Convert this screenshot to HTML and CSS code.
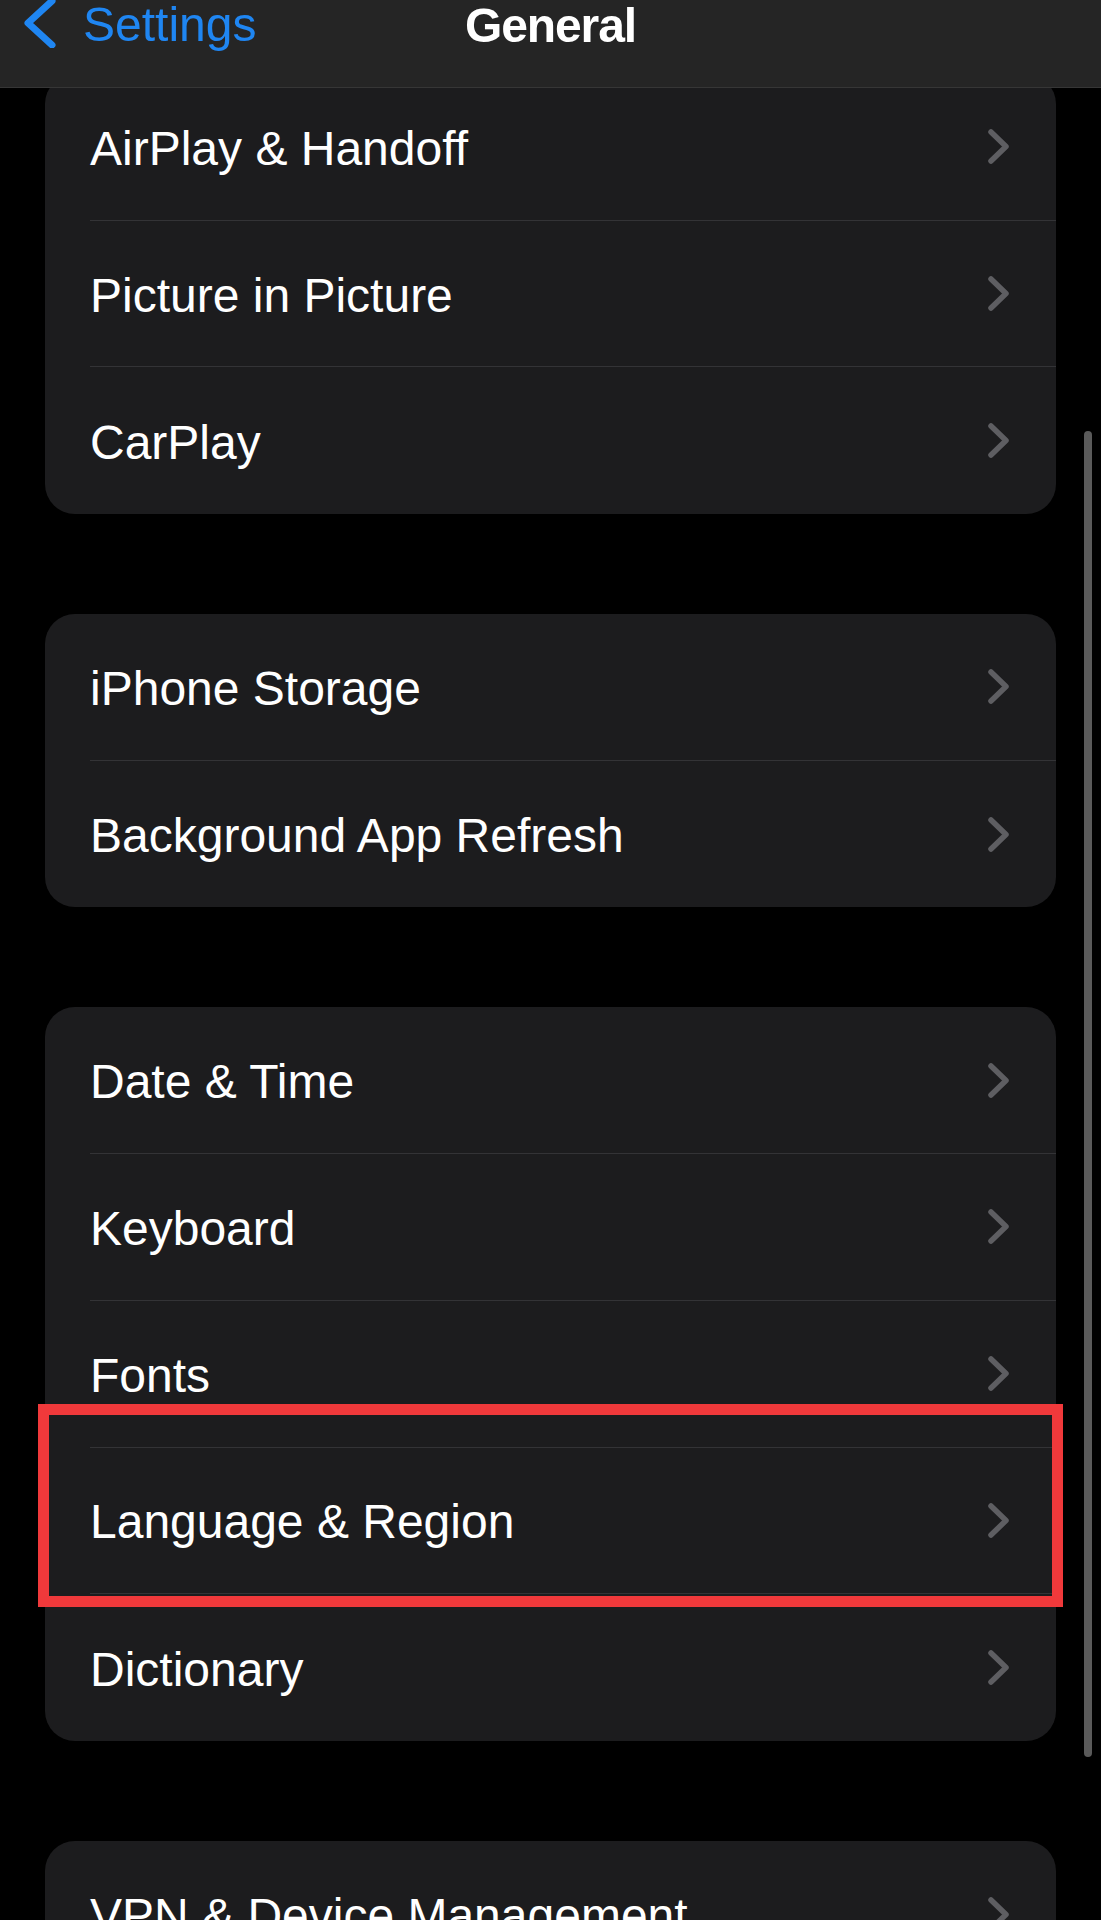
FILE: index.html
```html
<!DOCTYPE html>
<html lang="en">
<head>
<meta charset="utf-8">
<title>General</title>
<link rel="stylesheet" href="styles.css">
</head>
<body>
<header class="navbar">
  <div class="nav-back">
    <svg class="back-icon" width="60" height="48" viewBox="0 0 60 48" aria-hidden="true">
      <polyline points="52,1 28,23 52,45" fill="none" stroke="#1f86f2" stroke-width="7" stroke-linecap="round" stroke-linejoin="round"/>
    </svg>
    <span class="back-label">Settings</span>
  </div>
  <div class="nav-title">General</div>
  <div class="nav-spacer"></div>
</header>

<main class="content">
  <section class="group">
    <div class="row"><div class="row-body"><span class="label">AirPlay &amp; Handoff</span><svg class="chev" width="21" height="35" viewBox="0 0 21 35"><polyline points="3,3 18,17.5 3,32" fill="none" stroke="#5e5e62" stroke-width="5.5" stroke-linecap="round" stroke-linejoin="round"/></svg></div></div>
    <div class="row"><div class="row-body"><span class="label">Picture in Picture</span><svg class="chev" width="21" height="35" viewBox="0 0 21 35"><polyline points="3,3 18,17.5 3,32" fill="none" stroke="#5e5e62" stroke-width="5.5" stroke-linecap="round" stroke-linejoin="round"/></svg></div></div>
    <div class="row"><div class="row-body"><span class="label">CarPlay</span><svg class="chev" width="21" height="35" viewBox="0 0 21 35"><polyline points="3,3 18,17.5 3,32" fill="none" stroke="#5e5e62" stroke-width="5.5" stroke-linecap="round" stroke-linejoin="round"/></svg></div></div>
  </section>

  <section class="group">
    <div class="row"><div class="row-body"><span class="label">iPhone Storage</span><svg class="chev" width="21" height="35" viewBox="0 0 21 35"><polyline points="3,3 18,17.5 3,32" fill="none" stroke="#5e5e62" stroke-width="5.5" stroke-linecap="round" stroke-linejoin="round"/></svg></div></div>
    <div class="row"><div class="row-body"><span class="label">Background App Refresh</span><svg class="chev" width="21" height="35" viewBox="0 0 21 35"><polyline points="3,3 18,17.5 3,32" fill="none" stroke="#5e5e62" stroke-width="5.5" stroke-linecap="round" stroke-linejoin="round"/></svg></div></div>
  </section>

  <section class="group">
    <div class="row"><div class="row-body"><span class="label">Date &amp; Time</span><svg class="chev" width="21" height="35" viewBox="0 0 21 35"><polyline points="3,3 18,17.5 3,32" fill="none" stroke="#5e5e62" stroke-width="5.5" stroke-linecap="round" stroke-linejoin="round"/></svg></div></div>
    <div class="row"><div class="row-body"><span class="label">Keyboard</span><svg class="chev" width="21" height="35" viewBox="0 0 21 35"><polyline points="3,3 18,17.5 3,32" fill="none" stroke="#5e5e62" stroke-width="5.5" stroke-linecap="round" stroke-linejoin="round"/></svg></div></div>
    <div class="row"><div class="row-body"><span class="label">Fonts</span><svg class="chev" width="21" height="35" viewBox="0 0 21 35"><polyline points="3,3 18,17.5 3,32" fill="none" stroke="#5e5e62" stroke-width="5.5" stroke-linecap="round" stroke-linejoin="round"/></svg></div></div>
    <div class="row row-highlight"><div class="row-body"><span class="label">Language &amp; Region</span><svg class="chev" width="21" height="35" viewBox="0 0 21 35"><polyline points="3,3 18,17.5 3,32" fill="none" stroke="#5e5e62" stroke-width="5.5" stroke-linecap="round" stroke-linejoin="round"/></svg></div><div class="highlight-box"></div></div>
    <div class="row"><div class="row-body"><span class="label">Dictionary</span><svg class="chev" width="21" height="35" viewBox="0 0 21 35"><polyline points="3,3 18,17.5 3,32" fill="none" stroke="#5e5e62" stroke-width="5.5" stroke-linecap="round" stroke-linejoin="round"/></svg></div></div>
  </section>

  <section class="group">
    <div class="row"><div class="row-body"><span class="label">VPN &amp; Device Management</span><svg class="chev" width="21" height="35" viewBox="0 0 21 35"><polyline points="3,3 18,17.5 3,32" fill="none" stroke="#5e5e62" stroke-width="5.5" stroke-linecap="round" stroke-linejoin="round"/></svg></div></div>
  </section>
</main>

<div class="scroll-indicator"></div>
</body>
</html>
```

FILE: styles.css
```css
html, body {
  margin: 0;
  padding: 0;
  background: #000;
  height: 1920px;
  overflow: hidden;
}

body {
  font-family: "Liberation Sans", Arial, sans-serif;
  color: #fff;
  position: relative;
}

.navbar {
  position: fixed;
  top: 0;
  left: 0;
  right: 0;
  height: 88px;
  box-sizing: border-box;
  background: #252525;
  border-bottom: 1px solid #363636;
  display: grid;
  grid-template-columns: 1fr auto 1fr;
  align-items: start;
  z-index: 10;
}

.nav-back {
  display: flex;
  align-items: flex-start;
  gap: 23px;
}

.back-icon {
  display: block;
  flex: none;
}

.back-label {
  font-size: 48px;
  line-height: 48px;
  color: #1f86f2;
  margin-top: 1px;
}

.nav-title {
  font-size: 48px;
  line-height: 48px;
  font-weight: bold;
  letter-spacing: -1.1px;
  margin-top: 2px;
}

.content {
  padding: 74px 45px 0 45px;
  display: flex;
  flex-direction: column;
  gap: 100px;
}

.group {
  background: #1c1c1e;
  border-radius: 30px;
}

.row {
  position: relative;
  height: 146.7px;
  padding-left: 45px;
  box-sizing: border-box;
  display: flex;
}

.row-body {
  flex: 1;
  display: flex;
  align-items: center;
  justify-content: space-between;
  padding-right: 47px;
  border-bottom: 1.5px solid #333336;
}

.row:last-child .row-body {
  border-bottom: none;
}

.label {
  font-size: 48px;
  line-height: 56px;
  white-space: nowrap;
  padding-top: 4px;
}

.chev {
  display: block;
  flex: none;
}

.highlight-box {
  position: absolute;
  left: -7px;
  right: -7px;
  top: -44px;
  bottom: -13px;
  border: 11px solid #f0393b;
  pointer-events: none;
}

.scroll-indicator {
  position: fixed;
  left: 1084px;
  top: 431px;
  width: 8px;
  height: 1326px;
  border-radius: 4px;
  background: #5a5a5a;
}
```
